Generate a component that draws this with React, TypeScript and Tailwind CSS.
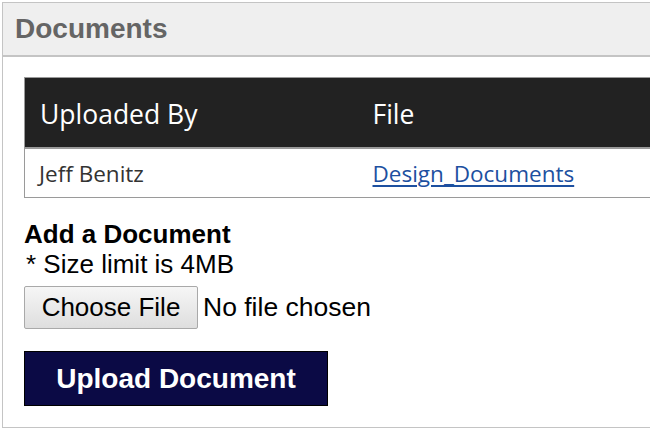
import React from "react";

export default function App() {
  return (
    <div className="w-[650px] h-[431px] overflow-hidden bg-white">
      <div className="ml-[2px] mt-[2px] w-[700px] h-[426px] border border-r-0 border-[#c4c4c4]">
        {/* panel header */}
        <div className="h-[54px] bg-[#efefef] border-b-2 border-[#c4c4c4] flex items-center pl-[12px]">
          <h2
            className="text-[28px] font-bold text-[#656565]"
            style={{ fontFamily: "'Liberation Sans', Arial, sans-serif" }}
          >
            Documents
          </h2>
        </div>

        <div className="pl-[21px] pt-[20px]">
          <table
            className="w-[680px] border border-[#9a9a9a] border-collapse"
            style={{ fontFamily: "'Open Sans', 'Noto Sans', sans-serif" }}
          >
            <thead>
              <tr className="h-[70px] bg-[#222222] text-white text-[26.5px] border-b-2 border-[#9a9a9a]">
                <th className="w-[333px] text-left font-normal pl-[15px] pt-[6px]">Uploaded By</th>
                <th className="text-left font-normal pl-[15px] pt-[6px]">File</th>
              </tr>
            </thead>
            <tbody>
              <tr className="h-[50px] text-[22.5px] text-[#333]">
                <td className="pl-[14px] pt-[3px]">Jeff Benitz</td>
                <td className="pl-[15px] pt-[3px]">
                  <a href="#" className="text-[#1d50a0] underline underline-offset-[3px]">
                    Design_Documents
                  </a>
                </td>
              </tr>
            </tbody>
          </table>

          <div
            className="mt-[21px] text-black"
            style={{ fontFamily: "'Liberation Sans', Arial, sans-serif" }}
          >
            <div className="text-[26px] font-bold leading-[30px]">Add a Document</div>
            <div className="text-[26px] leading-[30px] pl-[2px]">* Size limit is 4MB</div>

            <div className="flex items-center mt-[7px]">
              <button className="h-[43px] w-[174px] text-[26px] text-black border border-[#a9a9a9] rounded-[2px] bg-gradient-to-b from-[#f6f6f6] to-[#dedede]">
                Choose File
              </button>
              <span className="ml-[5px] text-[26.5px]">No file chosen</span>
            </div>

            <button className="mt-[22px] h-[55px] w-[304px] bg-[#0b0a45] border border-black text-white text-[28px] font-bold">
              Upload Document
            </button>
          </div>
        </div>
      </div>
    </div>
  );
}
